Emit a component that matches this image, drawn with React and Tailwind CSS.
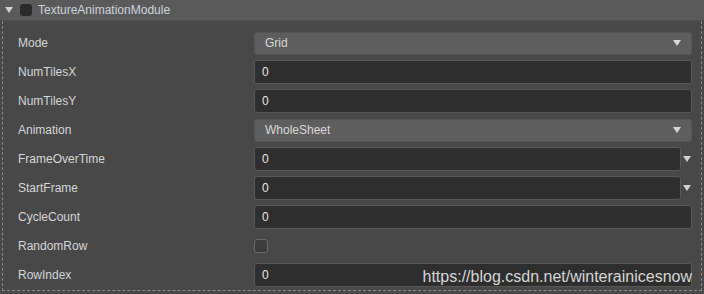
import React from 'react';

const rows = [
    { label: 'Mode', kind: 'select', value: 'Grid' },
    { label: 'NumTilesX', kind: 'input', value: '0' },
    { label: 'NumTilesY', kind: 'input', value: '0' },
    { label: 'Animation', kind: 'select', value: 'WholeSheet' },
    { label: 'FrameOverTime', kind: 'curve', value: '0' },
    { label: 'StartFrame', kind: 'curve', value: '0' },
    { label: 'CycleCount', kind: 'input', value: '0' },
    { label: 'RandomRow', kind: 'check' },
    { label: 'RowIndex', kind: 'input', value: '0' },
];

function Arrow({ className }) {
    return (
        <svg width="8" height="6" viewBox="0 0 8 6" className={className}>
            <path d="M0 0 L8 0 L4 6 Z" fill="currentColor" />
        </svg>
    );
}

function Field({ row }) {
    if (row.kind === 'select') {
        return (
            <div className="flex-1 h-[23px] rounded-[3px] bg-[#5e5e5e] border border-[#555] flex items-center pl-[10px] pr-[10px] text-[#d8d8d8]">
                <span className="flex-1">{row.value}</span>
                <Arrow className="text-[#d8d8d8]" />
            </div>
        );
    }
    if (row.kind === 'curve') {
        return (
            <div className="flex-1 flex items-center">
                <div className="flex-1 h-[24px] rounded-[3px] bg-[#2e2e2e] border border-[#575757] flex items-center pl-[7px] text-[#e6e6e6]">
                    {row.value}
                </div>
                <Arrow className="ml-[2px] mr-[1px] text-[#d0d0d0]" />
            </div>
        );
    }
    if (row.kind === 'check') {
        return (
            <div className="flex-1 flex items-center">
                <div className="w-[14px] h-[14px] rounded-[3px] border border-[#6a6a6a] bg-[#3c3c3c]" />
            </div>
        );
    }
    return (
        <div className="flex-1 h-[24px] rounded-[3px] bg-[#2e2e2e] border border-[#575757] flex items-center pl-[7px] text-[#e6e6e6]">
            {row.value}
        </div>
    );
}

export default function App() {
    return (
        <div
            className="relative w-[704px] h-[294px] bg-[#484848] text-[12px] overflow-hidden"
            style={{ fontFamily: '"Liberation Sans", Arial, sans-serif' }}
        >
            <div className="h-[21px] bg-[#5a5a5a] border-b border-[#4e4e4e] flex items-center">
                <Arrow className="ml-[5px] text-[#d0d0d0]" />
                <div className="ml-[7px] w-[12px] h-[12px] rounded-[3px] bg-[#2a2a2a]" />
                <span className="ml-[6px] text-[#cdd3da]">TextureAnimationModule</span>
            </div>
            <div className="ml-[2px] w-[700px] h-[270px] border-l border-r border-b border-dashed border-[#8a8a8a] pt-[10px] pl-[15px] pr-[9px] flex flex-col gap-[5px]">
                {rows.map((row) => (
                    <div key={row.label} className="flex items-center h-[24px]">
                        <div className="w-[236px] text-[#d4d6d8]">{row.label}</div>
                        <Field row={row} />
                    </div>
                ))}
            </div>
            <div className="absolute right-[12px] top-[265px] text-[16px] text-[#d6d6d6]">
                https://blog.csdn.net/winterainicesnow
            </div>
        </div>
    );
}
